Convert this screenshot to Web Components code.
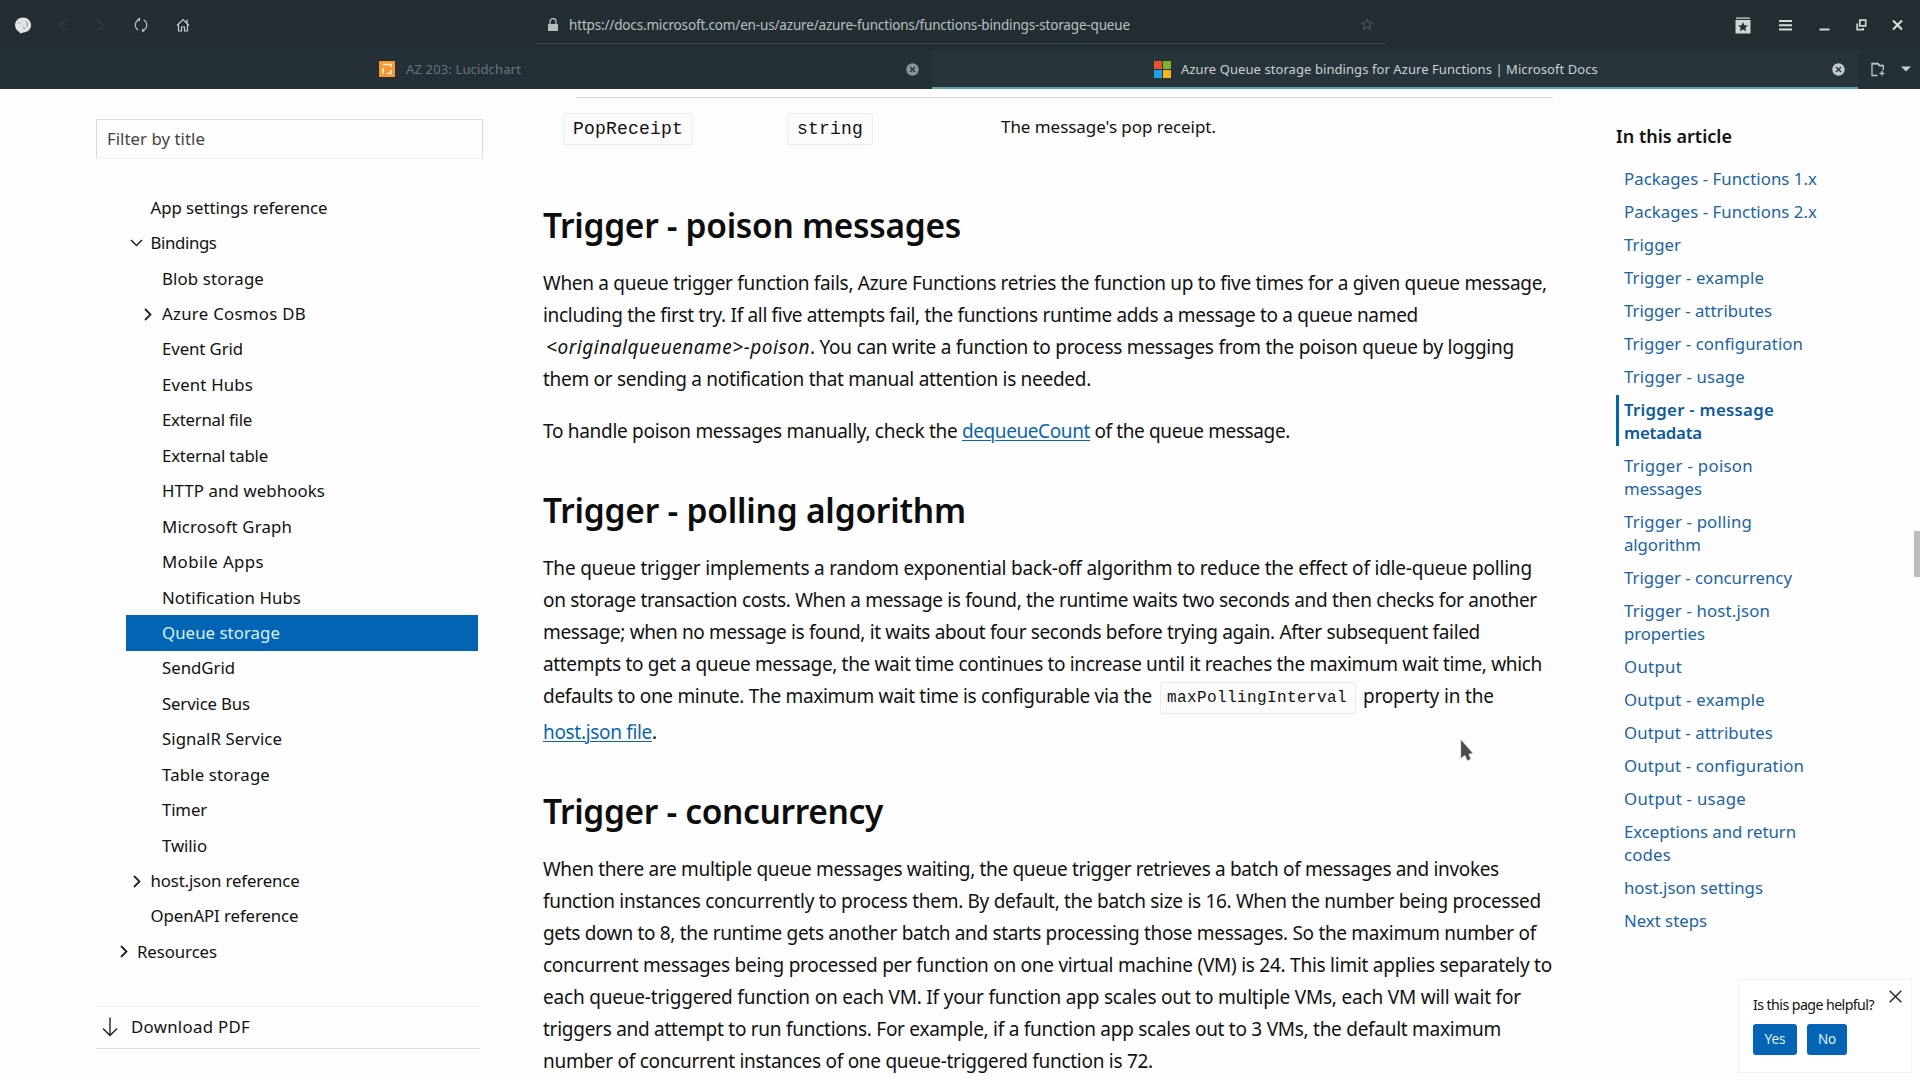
<!DOCTYPE html>
<html lang="en">
<head>
<meta charset="utf-8">
<title>Azure Queue storage bindings for Azure Functions | Microsoft Docs</title>
<style>
html,body{margin:0;height:100%;overflow:hidden;background:#fdfdfd}
body{font-family:"Noto Sans","Open Sans",sans-serif;color:#111;width:1920px;height:1080px;display:flex;flex-direction:column}
</style>
</head>
<body>
<browser-toolbar></browser-toolbar>
<browser-tabs></browser-tabs>
<docs-page></docs-page>
<script>
const ICONS = {
  logo:[16,17,'<path d="M8 .5C12.500.5 16 3.800 16 8c0 4-3 7-6.500 7.300L5 16.500 4.500 15C2 14 0 11 0 8 0 4 3.500.5 8 .5z" fill="#dfe4e6"/><path d="M11 4.500c2 1 2 4 .5 5.500M3.500 5.500l1 1M8 10l2 2" stroke="#9aa5a9" stroke-width="1.200" fill="none"/>'],
  back:[10,14,'<path d="M8 1.500L2 7l6 5.500" stroke="#2e393f" stroke-width="2.200" fill="none"/>'],
  fwd:[10,14,'<path d="M2 1.500L8 7l-6 5.500" stroke="#2e393f" stroke-width="2.200" fill="none"/>'],
  reload:[14,16,'<path d="M5.200 2.600A5.700 5.700 0 0 0 4.300 13M8.800 13.400A5.700 5.700 0 0 0 9.700 3" stroke="#b7c0c3" stroke-width="1.200" fill="none"/><path d="M6 .4v4.200L3 2.300zM8 15.600v-4.200l3 2.300z" fill="#b7c0c3"/>'],
  home:[14,14,'<path d="M1 7.500L7 1.500l6 6M2.500 6.500v6.500h3V9h3v4h3V6.500M11 5V1.500" stroke="#c3cbce" stroke-width="1.200" fill="none"/>'],
  lock:[12,14,'<path d="M1 6h10v7H1z" fill="#b4bdc0"/><path d="M3 6.500V3.600a3 3 0 0 1 6 0v2.900" stroke="#b4bdc0" stroke-width="1.300" fill="none"/>'],
  star:[12,13,'<path d="M6 1l1.500 3.600 3.800.3-2.900 2.500.9 3.800L6 9.200l-3.300 2 .9-3.800L.7 4.900l3.800-.3z" stroke="#4b575d" stroke-width="1.100" fill="none"/>'],
  marks:[16,17,'<path d="M1 .5h14v1.300H1zM.5 3h15v13.500H.5z" fill="#cfd6d8"/><path d="M8 5l1.400 3.200 3.600.3-2.700 2.300.8 3.400L8 12.400l-3.100 1.800.8-3.400L3 8.500l3.600-.3z" fill="#232e33"/>'],
  menu:[13,12,'<path d="M0 1h13v2H0zM0 5.200h13v2H0zM0 9.400h13v2H0z" fill="#d5dbdd"/>'],
  min:[11,12,'<path d="M.5 9.500h10v2H.5z" fill="#cfd6d8"/>'],
  restore:[11,12,'<path d="M3.800 1.200h5.900v5.600H3.800z" stroke="#cfd6d8" stroke-width="1.700" fill="none"/><path d="M1.200 4.500v6.200h6V9" stroke="#cfd6d8" stroke-width="1.700" fill="none"/>'],
  close:[11,12,'<path d="M1 1.500l9 9M10 1.500l-9 9" stroke="#dde2e4" stroke-width="2" fill="none"/>'],
  lucid:[16,16,'<path d="M0 0h16v16H0z" fill="#f39a32"/><path d="M4 3.500h8v2.500M12 9v3.500H8M4 7v5.500" stroke="#fff0d8" stroke-width="1.700" fill="none"/>'],
  ms:[17,17,'<path d="M0 0h8v8H0z" fill="#e8542b"/><path d="M9 0h8v8H9z" fill="#7cb526"/><path d="M0 9h8v8H0z" fill="#209fe2"/><path d="M9 9h8v8H9z" fill="#f3b51b"/>'],
  tabx:[13,13,'<circle cx="6.500" cy="6.500" r="6.200" fill="currentColor"/><path d="M4 4l5 5M9 4L4 9" stroke="#263238" stroke-width="1.400"/>'],
  newtab:[15,15,'<path d="M6.500 13.500H1V1.500h6l1.500 2h3.800V8" stroke="#c3cbce" stroke-width="1.300" fill="none"/><path d="M1 1h6l1.500 2.200H12v1H8L6.500 2.500H1z" fill="#c3cbce"/><path d="M11 8.800v5M8.500 11.300h5" stroke="#c3cbce" stroke-width="1.300"/>'],
  tri:[10,6,'<path d="M0 .5h10L5 5.500z" fill="#c9d0d2"/>'],
  down:[13,8,'<path d="M1 1l5.500 5.500L12 1" stroke="#222" stroke-width="1.500" fill="none"/>'],
  right:[8,13,'<path d="M1 1l5.500 5.500L1 12" stroke="#222" stroke-width="1.800" fill="none"/>'],
  arrow:[16,20,'<path d="M8 .5v18M1 11.500l7 7 7-7" stroke="#222" stroke-width="1.400" fill="none"/>'],
  x:[13,13,'<path d="M.7.700l11.600 11.600M12.300.700L.7 12.300" stroke="#222" stroke-width="1.400" fill="none"/>'],
  pointer:[13,22,'<path d="M1 0v18l4-3 2.500 5.500 3-1.500L8.500 14l4-1z" fill="#4b4b4b" stroke="#9a9a9a" stroke-width=".5"/>']
};
function define(name, css, html){
  customElements.define(name, class extends HTMLElement{
    constructor(){
      super();
      const t=document.createElement('template');
      t.innerHTML='<style>'+css+'</style>'+html;
      this.attachShadow({mode:'open'}).append(t.content.cloneNode(true));
    }
  });
}
class UiIcon extends HTMLElement{
  connectedCallback(){
    if(this.shadowRoot) return;
    const [w,h,body]=ICONS[this.getAttribute('name')];
    this.attachShadow({mode:'open'}).innerHTML=`<style>:host{display:block;flex:none;width:${w}px;height:${h}px}svg{display:block}</style><svg width="${w}" height="${h}" viewBox="0 0 ${w} ${h}">${body}</svg>`;
  }
}

define('browser-toolbar', `
:host{display:flex;height:50px;background:#232d32;flex:none;box-sizing:border-box}
.left{display:flex;align-items:center;width:536px;box-sizing:border-box;padding-left:15px}
.url{display:flex;align-items:center;width:849px;height:44px;box-sizing:border-box;border-bottom:1px solid #3b474c;padding:6px 12px 0 11px;color:#b9c1c4;font-size:13.500px;line-height:20px}
.url .txt{margin-left:10px}.url ui-icon:last-child{margin-left:auto}
.right{display:flex;align-items:center;padding-left:350px}
`, `
<div class="left"><ui-icon name="logo"></ui-icon><ui-icon name="back" style="margin-left:27px"></ui-icon><ui-icon name="fwd" style="margin-left:27px"></ui-icon><ui-icon name="reload" style="margin-left:29px"></ui-icon><ui-icon name="home" style="margin-left:28px"></ui-icon></div>
<div class="url"><ui-icon name="lock"></ui-icon><fit-text class="txt" w="561">https://docs.microsoft.com/en-us/azure/azure-functions/functions-bindings-storage-queue</fit-text><ui-icon name="star"></ui-icon></div>
<div class="right"><ui-icon name="marks"></ui-icon><ui-icon name="menu" style="margin-left:28px"></ui-icon><ui-icon name="min" style="margin-left:27px"></ui-icon><ui-icon name="restore" style="margin-left:26px"></ui-icon><ui-icon name="close" style="margin-left:25px"></ui-icon></div>
`);

define('browser-tabs', `
:host{display:flex;height:39px;background:#242f36;flex:none;font-size:13px;line-height:20px}
.tab{display:flex;align-items:center;box-sizing:border-box}
.one{width:932px;padding-left:379px;padding-bottom:1px;color:#69757a}
.two{width:926px;padding-left:222px;color:#cbd2d4;background:#27343a;border-bottom:2px solid #5da3ac;padding-top:1px}
.tab fit-text{margin-left:11px}
.end{display:flex;align-items:center;padding:0 0 1px 13px}
`, `
<div class="tab one"><ui-icon name="lucid"></ui-icon><fit-text w="115">AZ 203: Lucidchart</fit-text><ui-icon name="tabx" style="margin-left:385px;color:#8c979b"></ui-icon></div>
<div class="tab two"><ui-icon name="ms"></ui-icon><fit-text w="417" style="margin-left:10px">Azure Queue storage bindings for Azure Functions | Microsoft Docs</fit-text><ui-icon name="tabx" style="margin-left:234px;color:#c3cbce"></ui-icon></div>
<div class="end"><ui-icon name="newtab"></ui-icon><ui-icon name="tri" style="margin-left:15px"></ui-icon></div>
`);

define('tree-item', `
:host{display:flex;align-items:center;height:35.450px;margin-left:30px;width:352px;box-sizing:border-box;padding-left:var(--indent,36px)}
:host([level="1"]){--indent:11px}:host([level="2"]){--indent:24.500px}
:host([selected]){background:#0464b4;color:#d9f2ff}
.chev{width:0;display:flex;justify-content:flex-end}
`, `<div class="chev"><slot name="icon"></slot></div><slot></slot>`);

const tree=[
 ['App settings reference',2,177],['Bindings',2,66,'down',8],['Blob storage',3,102],['Azure Cosmos DB',3,144,'right',10],['Event Grid',3,81],['Event Hubs',3,91],['External file',3,90],['External table',3,106],['HTTP and webhooks',3,163],['Microsoft Graph',3,130],['Mobile Apps',3,102],['Notification Hubs',3,139],['Queue storage',3,118,'sel'],['SendGrid',3,73],['Service Bus',3,88],['SignalR Service',3,120],['Table storage',3,108],['Timer',3,45],['Twilio',3,45],['host.json reference',2,149,'right',10],['OpenAPI reference',2,148],['Resources',1,80,'right',9]
].map(([t,l,w,i,m])=>`<tree-item level="${l}"${i==='sel'?' selected':''}>${i&&i!=='sel'?`<ui-icon slot="icon" name="${i}" style="margin-right:${m}px"></ui-icon>`:''}<fit-text w="${w}">${t}</fit-text></tree-item>`).join('');

define('docs-sidebar', `
:host{display:block;width:543px;flex:none;box-sizing:border-box;padding:30px 0 0 96px;font-size:16.800px;line-height:26px}
.filter{width:387px;height:40px;box-sizing:border-box;border:1px solid #dcdcdc;border-bottom-color:#f3f3f3;padding:6px 0 0 10px;color:#444}
.tree{padding-top:31px}
.pdf{margin-top:36.600px;width:384px;height:43px;box-sizing:border-box;border-top:1px solid #eee;border-bottom:1px solid #dcdcdc;display:flex;align-items:center;padding:0 0 1px 6px;gap:13px}
`, `<div class="filter"><fit-text w="98">Filter by title</fit-text></div><div class="tree">${tree}</div><div class="pdf"><ui-icon name="arrow"></ui-icon><fit-text w="119">Download PDF</fit-text></div>`);

define('docs-code', `
:host{display:inline-block;box-sizing:border-box;border:1px solid #ececec;background:#fbfbfb;border-radius:3px;font-family:"Liberation Mono",monospace;vertical-align:baseline;white-space:pre}
`, `<slot></slot>`);

define('docs-section', `
:host{display:block}
h2{margin:0;font-weight:600;font-size:33.500px;line-height:44px;height:44px;color:#0d0d0d}
.body{padding-top:20px}
`, `<h2><slot name="title"></slot></h2><div class="body"><slot></slot></div>`);

const L=(w,t)=>`<div class="line"><fit-text w="${w}">${t}</fit-text></div>`;
define('docs-article', `
:host{display:block;width:1073px;flex:none;font-size:19px;line-height:32px;color:#111}
.row{margin-left:33px;width:977px;height:60px;border-top:1px solid #dcdcdc;margin-top:8px;display:flex;align-items:flex-start;font-size:17px;line-height:26px}
.row docs-code{height:32px;line-height:30px;font-size:18px;margin-top:15px;padding:0 9px}
.row docs-code:first-child{margin-left:-13px}
.row>fit-text{margin-top:16px;margin-left:128px}
.line{height:32px;white-space:pre;display:flex}
a{color:#0a65ad;text-decoration:underline;text-decoration-thickness:1px;text-underline-offset:2px}
docs-section.a{margin-top:45px}
.gap{margin-top:19.500px}.small{margin-top:4px}
docs-section.b{margin-top:41px}
.inline{height:32px;line-height:30px;font-size:16px;padding:0 8px 0 6px;margin:2px 7px 0 8px}
`, `
<div class="row"><docs-code><fit-text w="110">PopReceipt</fit-text></docs-code><docs-code style="margin-left:94px"><fit-text w="66">string</fit-text></docs-code><fit-text w="215">The message's pop receipt.</fit-text></div>
<docs-section class="a"><fit-text slot="title" w="418">Trigger - poison messages</fit-text>
${L(1004,'When a queue trigger function fails, Azure Functions retries the function up to five times for a given queue message,')}
${L(875,'including the first try. If all five attempts fail, the functions runtime adds a message to a queue named')}
<div class="line"><fit-text w="264" style="margin-left:3px"><i>&lt;originalqueuename&gt;-poison</i></fit-text><fit-text w="704">. You can write a function to process messages from the poison queue by logging</fit-text></div>
${L(548,'them or sending a notification that manual attention is needed.')}
<div class="line gap"><fit-text w="419">To handle poison messages manually, check the </fit-text><fit-text w="128"><a>dequeueCount</a></fit-text><fit-text w="200"> of the queue message.</fit-text></div>
</docs-section>
<docs-section class="b"><fit-text slot="title" w="423">Trigger - polling algorithm</fit-text>
${L(989,'The queue trigger implements a random exponential back-off algorithm to reduce the effect of idle-queue polling')}
${L(994,'on storage transaction costs. When a message is found, the runtime waits two seconds and then checks for another')}
${L(937,'message; when no message is found, it waits about four seconds before trying again. After subsequent failed')}
${L(999,'attempts to get a queue message, the wait time continues to increase until it reaches the maximum wait time, which')}
<div class="line"><fit-text w="609">defaults to one minute. The maximum wait time is configurable via the</fit-text><docs-code class="inline"><fit-text w="180">maxPollingInterval</fit-text></docs-code><fit-text w="131">property in the</fit-text></div>
<div class="line small"><fit-text w="109"><a>host.json file</a></fit-text>.</div>
</docs-section>
<docs-section class="b"><fit-text slot="title" w="340">Trigger - concurrency</fit-text>
${L(956,'When there are multiple queue messages waiting, the queue trigger retrieves a batch of messages and invokes')}
${L(998,'function instances concurrently to process them. By default, the batch size is 16. When the number being processed')}
${L(993,'gets down to 8, the runtime gets another batch and starts processing those messages. So the maximum number of')}
${L(1009,'concurrent messages being processed per function on one virtual machine (VM) is 24. This limit applies separately to')}
${L(978,'each queue-triggered function on each VM. If your function app scales out to multiple VMs, each VM will wait for')}
${L(958,'triggers and attempt to run functions. For example, if a function app scales out to 3 VMs, the default maximum')}
${L(610,'number of concurrent instances of one queue-triggered function is 72.')}
</docs-section>`);

define('toc-item', `
:host{display:block;padding:3px 0 2px 5px;border-left:3px solid transparent}
:host([active]){border-left-color:#0463ad;font-weight:600;color:#0b5a9c}
`, `<slot></slot>`);
const toc=[[['Packages - Functions 1.x',193]],[['Packages - Functions 2.x',193]],[['Trigger',57]],[['Trigger - example',140]],[['Trigger - attributes',148]],[['Trigger - configuration',179]],[['Trigger - usage',121]],[['Trigger - message',150],['metadata',78]],[['Trigger - poison',129],['messages',78]],[['Trigger - polling',128],['algorithm',77]],[['Trigger - concurrency',168]],[['Trigger - host.json',146],['properties',81]],[['Output',58]],[['Output - example',141]],[['Output - attributes',149]],[['Output - configuration',180]],[['Output - usage',122]],[['Exceptions and return',172],['codes',47]],[['host.json settings',139]],[['Next steps',83]]]
.map((r,i)=>`<toc-item${i===7?' active':''}>${r.map(([t,w])=>`<div><fit-text w="${w}">${t}</fit-text></div>`).join('')}</toc-item>`).join('');
define('docs-toc', `
:host{display:block;flex:1;box-sizing:border-box;padding:34px 0 0;font-size:16.800px;line-height:23px;color:#1c64a0}
.head{font-weight:600;font-size:18px;line-height:26px;color:#111;height:26px}
.list{display:flex;flex-direction:column;gap:5px;padding-top:15px}
`, `<div class="head"><fit-text w="116">In this article</fit-text></div><div class="list">${toc}</div>`);

define('feedback-card', `
:host{position:absolute;left:1738px;top:979px;width:174px;height:94px;box-sizing:border-box;background:#fff;border:1px solid #f3f3f3;padding:12px 9px 0 14px;font-size:14.200px;line-height:22px}
.top{display:flex;justify-content:space-between;height:32px}
.top fit-text{margin-top:2px}
.btns{display:flex;gap:10px}
.btns div{height:31px;line-height:30px;border-radius:3px;background:#0564b3;color:#dff3ff;text-align:center;font-size:13.500px;width:44px}
.btns div:last-child{width:40px}
`, `<div class="top"><fit-text w="121">Is this page helpful?</fit-text><ui-icon name="x" style="margin-top:-2px"></ui-icon></div><div class="btns"><div><fit-text w="21">Yes</fit-text></div><div><fit-text w="18">No</fit-text></div></div>`);

define('docs-page', `
:host{display:flex;flex:1;min-height:0;background:#fdfdfd;overflow:hidden}
.thumb{position:absolute;left:1914px;top:531px;width:6px;height:46px;background:#bdbdbd}
.ptr{position:absolute;left:1460px;top:740px}
`, `<docs-sidebar></docs-sidebar><docs-article></docs-article><docs-toc></docs-toc><feedback-card></feedback-card><div class="thumb"></div><ui-icon class="ptr" name="pointer"></ui-icon>`);

customElements.define('ui-icon', UiIcon);

/* A run of text tracked out or in to a set width. */
customElements.define('fit-text', class extends HTMLElement{
  connectedCallback(){
    if(!this.shadowRoot) this.attachShadow({mode:'open'}).innerHTML='<style>:host{display:inline-block;white-space:pre;flex:none}</style><slot></slot>';
    this.style.letterSpacing='0.001px';
    const w=this.getBoundingClientRect().width, n=this.textContent.length;
    this.style.letterSpacing=((+this.getAttribute('w')-w)/n).toFixed(4)+'px';
  }
});
</script>
</body>
</html>
